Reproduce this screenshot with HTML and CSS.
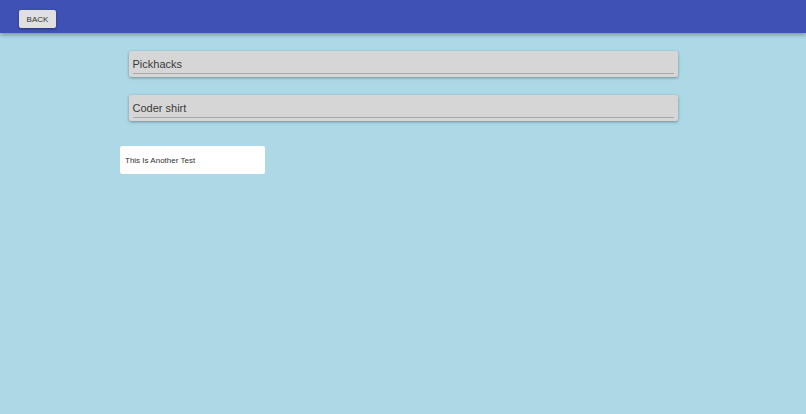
FILE: index.html
```html
<!DOCTYPE html>
<html>
<head>
<meta charset="utf-8">
<link rel="stylesheet" href="styles.css">
</head>
<body>
<header class="topbar">
  <button class="back-btn">BACK</button>
</header>
<main class="content">
  <div class="cards">
    <div class="card"><div class="field">Pickhacks</div></div>
    <div class="card"><div class="field">Coder shirt</div></div>
  </div>
  <div class="note">This Is Another Test</div>
</main>
</body>
</html>
```
FILE: styles.css
```css
html, body {
  margin: 0;
  padding: 0;
  height: 100%;
}
body {
  background: #add8e6;
  font-family: "Liberation Sans", Arial, sans-serif;
  color: #333;
}
.topbar {
  height: 33px;
  box-sizing: border-box;
  background: #3f51b5;
  padding: 10px 0 0 19px;
  box-shadow: 0 2px 4px rgba(0,0,0,0.3);
  position: relative;
}
.back-btn {
  display: block;
  width: 37px;
  height: 18px;
  padding: 0;
  border: none;
  border-radius: 2px;
  background: #e0e0e0;
  color: #333;
  font-family: "Liberation Sans", Arial, sans-serif;
  font-size: 8px;
  box-shadow: 0 1px 3px rgba(0,0,0,0.35);
}
.content {
  padding-top: 18px;
}
.cards {
  display: flex;
  flex-direction: column;
  gap: 18px;
  align-items: center;
}
.card {
  width: 549px;
  box-sizing: border-box;
  background: #d6d6d6;
  padding: 6px 4px 3px;
  border-radius: 2px;
  box-shadow: 0 1px 3px rgba(0,0,0,0.35);
}
.field {
  font-size: 11px;
  line-height: 14px;
  color: #3a3a3a;
  padding-bottom: 2px;
  border-bottom: 1px solid #a8a8a8;
}
.note {
  margin: 25px 0 0 120px;
  width: 145px;
  height: 28px;
  box-sizing: border-box;
  background: #fff;
  border-radius: 2px;
  padding: 0 5px;
  display: flex;
  align-items: center;
  font-size: 8px;
  color: #333;
}
```
